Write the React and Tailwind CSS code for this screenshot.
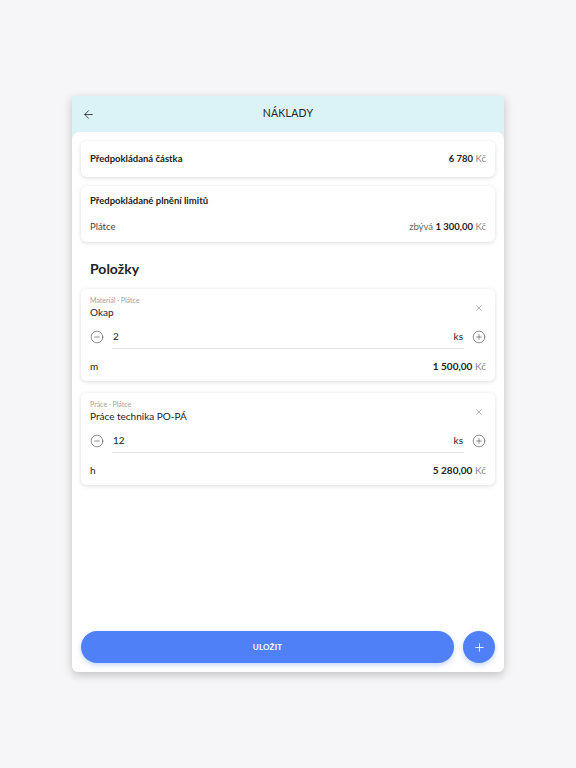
import { ArrowLeft, X, CircleMinus, CirclePlus, Plus } from 'lucide-react'

const items = [
  { meta: 'Materiál · Plátce', name: 'Okap', qty: '2', unit: 'm', price: '1 500,00' },
  { meta: 'Práce · Plátce', name: 'Práce technika PO-PÁ', qty: '12', unit: 'h', price: '5 280,00' },
]

function ItemCard({ item }) {
  return (
    <div className="bg-white rounded-md shadow-[0_1px_4px_rgba(0,0,0,0.14)] px-[9px] pt-[7px]">
      <div className="flex items-center justify-between">
        <div>
          <p className="text-[7px] leading-[9px] text-[#a3a3a3]">{item.meta}</p>
          <p className="text-[10px] leading-[15px] text-[#222]">{item.name}</p>
        </div>
        <X size={10} strokeWidth={1.3} className="text-[#777] mr-[2px]" />
      </div>
      <div className="flex items-center mt-[5px]">
        <CircleMinus size={14} strokeWidth={1} className="text-[#444]" />
        <div className="flex-1 flex items-center justify-between ml-[8px] mr-[8px] h-[24px] border-b border-[#e4e4e4] text-[10px] text-[#222]">
          <span className="pl-[1px]">{item.qty}</span>
          <span className="pr-[1px]">ks</span>
        </div>
        <CirclePlus size={14} strokeWidth={1} className="text-[#444]" />
      </div>
      <div className="flex items-center justify-between pt-[11px] pb-[8px] leading-[13px] text-[10px] text-[#222]">
        <span>{item.unit}</span>
        <span><b className="font-bold">{item.price}</b> <span className="text-[#888]">Kč</span></span>
      </div>
    </div>
  )
}

export default function App() {
  return (
    <div className="min-h-screen bg-[#f6f5f8] pt-[96px] px-[72px] font-['Lato',sans-serif]">
      <div className="w-[432px] h-[576px] flex flex-col bg-[#dbf3f6] rounded-b-md overflow-hidden shadow-[0_3px_10px_rgba(0,0,0,0.22)]">
        <header className="h-9 shrink-0 flex items-center relative">
          <ArrowLeft size={13} strokeWidth={1.5} className="absolute left-[10px] text-[#222]" />
          <h1 className="w-full text-center text-[10.5px] text-[#222] tracking-wide">NÁKLADY</h1>
        </header>
        <main className="flex-1 bg-white rounded-t-lg flex flex-col px-[9px] pt-[9px] pb-[9px]">
          <div className="bg-white rounded-md shadow-[0_1px_4px_rgba(0,0,0,0.14)] h-9 px-[9px] flex items-center justify-between text-[9.5px] text-[#222]">
            <span className="font-bold">Předpokládaná částka</span>
            <span><b className="font-bold">6 780</b> <span className="text-[#888]">Kč</span></span>
          </div>
          <div className="bg-white rounded-md shadow-[0_1px_4px_rgba(0,0,0,0.14)] mt-[9px] px-[9px] h-[56px] flex flex-col justify-center gap-[12px] text-[9.5px] text-[#222]">
            <span className="font-bold">Předpokládané plnění limitů</span>
            <div className="flex items-center justify-between">
              <span className="text-[#444]">Plátce</span>
              <span><span className="text-[#666]">zbývá</span> <b className="font-bold">1 300,00</b> <span className="text-[#888]">Kč</span></span>
            </div>
          </div>
          <h2 className="text-[14px] font-bold text-[#222] px-[9px] mt-[17px] mb-[10px] leading-[20px]">Položky</h2>
          <div className="flex flex-col gap-[12px]">
            {items.map(i => <ItemCard key={i.name} item={i} />)}
          </div>
          <div className="mt-auto flex items-center gap-[9px]">
            <button className="flex-1 h-8 rounded-full bg-[#4f80f7] text-white text-[8px] font-bold tracking-wide shadow-[0_2px_5px_rgba(79,128,247,0.35)]">ULOŽIT</button>
            <button className="w-8 h-8 rounded-full bg-[#4f80f7] text-white flex items-center justify-center shadow-[0_2px_5px_rgba(79,128,247,0.35)]">
              <Plus size={13} strokeWidth={1.5} />
            </button>
          </div>
        </main>
      </div>
    </div>
  )
}
